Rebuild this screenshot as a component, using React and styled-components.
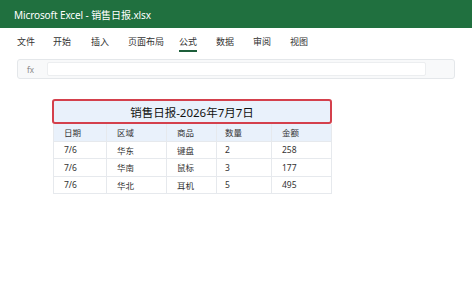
import React from 'react'
import styled, { createGlobalStyle } from 'styled-components';

const GlobalStyle = createGlobalStyle`
  html, body {
    margin: 0;
    padding: 0;
    background: #ffffff;
    font-family: "Noto Sans", "Noto Sans CJK SC", sans-serif;
  }
`;

const Page = styled.div`
  width: 472px;
  height: 288px;
  display: flex;
  flex-direction: column;
  background: #ffffff;
`;

const TitleBar = styled.div`
  height: 28px;
  flex-shrink: 0;
  background: #20703f;
  color: #ffffff;
  display: flex;
  align-items: center;
  padding-left: 14px;
  font-size: 10px;
  letter-spacing: -0.1px;
`;

const TabRow = styled.div`
  display: flex;
  padding: 0 17px;
  height: 24px;
  flex-shrink: 0;
  align-items: flex-end;
`;

const Tab = styled.div`
  font-size: 9px;
  color: #333;
  margin-right: ${p => p.gap}px;
  padding-bottom: 2px;
  height: 18px;
  box-sizing: border-box;
  display: flex;
  align-items: center;
  border-bottom: 2px solid ${p => (p.active ? '#1d5e3a' : 'transparent')};
`;

const FormulaBar = styled.div`
  margin: 7px 17px 0;
  height: 18px;
  flex-shrink: 0;
  border: 1px solid #e4e7ea;
  border-radius: 3px;
  background: #f8f9fa;
  display: flex;
  align-items: center;
  padding-left: 9px;
`;

const Fx = styled.span`
  font-size: 8px;
  color: #888;
  width: 20px;
`;

const FxInput = styled.div`
  width: 377px;
  height: 12px;
  background: #ffffff;
  border: 1px solid #eceef0;
  border-radius: 2px;
`;

const Sheet = styled.div`
  margin: 20px 0 0 52px;
  width: 280px;
`;

const SheetTitle = styled.div`
  height: 25px;
  box-sizing: border-box;
  border: 2px solid #d4404c;
  border-radius: 3px;
  background: #e9f1fb;
  display: flex;
  align-items: center;
  justify-content: center;
  font-size: 11.5px;
  color: #111;
  font-weight: 400;
`;

const Table = styled.div`
  margin: 0 1px;
  display: grid;
  grid-template-columns: 53px 60px 50px 55px 60px;
  border-left: 1px solid #e6e9ed;
`;

const Cell = styled.div`
  height: 17.5px;
  box-sizing: border-box;
  display: flex;
  align-items: center;
  padding-left: ${p => p.pad}px;
  font-size: 8.5px;
  color: #333;
  background: ${p => (p.head ? '#e9f1fb' : '#ffffff')};
  border-right: 1px solid #e6e9ed;
  border-bottom: 1px solid #e6e9ed;
`;

const tabs = [
  ['文件', 18],
  ['开始', 20],
  ['插入', 19],
  ['页面布局', 15],
  ['公式', 19],
  ['数据', 19],
  ['审阅', 19],
  ['视图', 0],
];

const head = ['日期', '区域', '商品', '数量', '金额'];
const rows = [
  ['7/6', '华东', '键盘', '2', '258'],
  ['7/6', '华南', '鼠标', '3', '177'],
  ['7/6', '华北', '耳机', '5', '495'],
];
const pads = [10, 10, 10, 8, 10];

export default function App() {
  return (
    <Page>
      <GlobalStyle />
      <TitleBar>Microsoft Excel - 销售日报.xlsx</TitleBar>
      <TabRow>
        {tabs.map(([name, gap]) => (
          <Tab key={name} gap={gap} active={name === '公式'}>{name}</Tab>
        ))}
      </TabRow>
      <FormulaBar>
        <Fx>fx</Fx>
        <FxInput />
      </FormulaBar>
      <Sheet>
        <SheetTitle>销售日报-2026年7月7日</SheetTitle>
        <Table>
          {head.map((h, i) => <Cell key={h} head pad={pads[i]}>{h}</Cell>)}
          {rows.map((r, ri) =>
            r.map((c, ci) => <Cell key={ri + '-' + ci} pad={pads[ci]}>{c}</Cell>)
          )}
        </Table>
      </Sheet>
    </Page>
  )
}
